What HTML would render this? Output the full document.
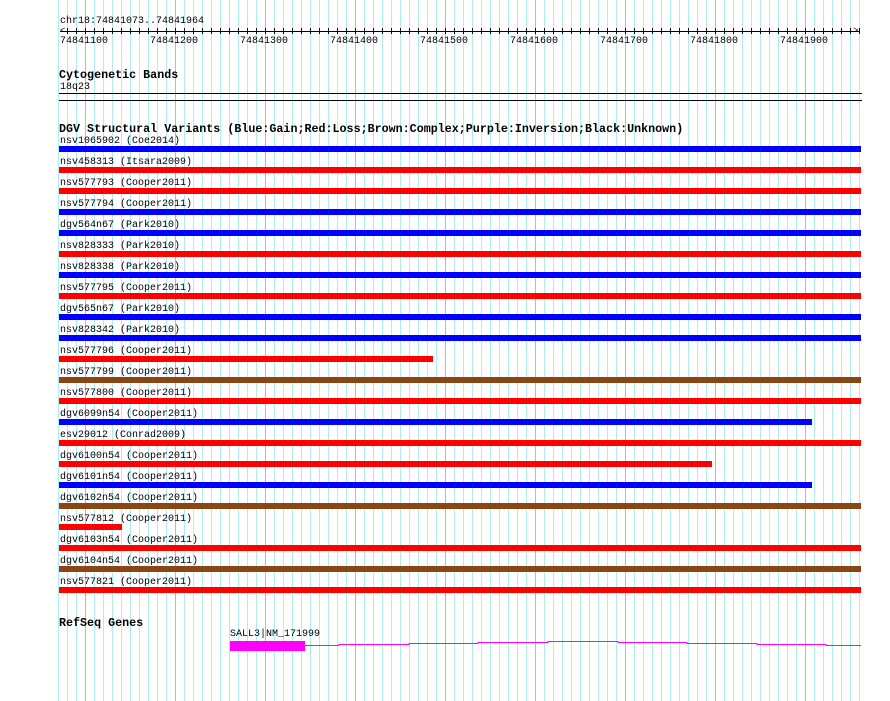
<!DOCTYPE html>
<html><head><style>
body{margin:0;width:890px;height:701px;background:#fff;position:relative;overflow:hidden;font-family:"Liberation Mono",monospace;}
.g{position:absolute;top:0;height:701px;width:1px;background:#aeeef0}
.M{background:#8cc8ee}
.t{position:absolute;font-size:10px;line-height:10px;color:#000;white-space:nowrap}
.b{position:absolute;font-size:11.7px;font-weight:bold;line-height:12px;white-space:nowrap}
.bar{position:absolute;left:59px;height:6px}
.tk{position:absolute;top:27px;width:1px;height:8px;background:#000}
</style></head><body>
<div id="grid"></div>
<div class="t" style="left:60px;top:17px">chr18:74841073..74841964</div>
<div style="position:absolute;left:60px;top:31px;width:800px;height:1px;background:#000"></div>
<div class="t" style="left:60px;top:26px;font-size:9px">&lt;</div>
<div class="t" style="left:853px;top:26px;font-size:9px">&gt;</div>
<div id="ticks"></div>
<div class="t" style="left:60px;top:37px">74841100</div>
<div class="t" style="left:150px;top:37px">74841200</div>
<div class="t" style="left:240px;top:37px">74841300</div>
<div class="t" style="left:330px;top:37px">74841400</div>
<div class="t" style="left:420px;top:37px">74841500</div>
<div class="t" style="left:510px;top:37px">74841600</div>
<div class="t" style="left:600px;top:37px">74841700</div>
<div class="t" style="left:690px;top:37px">74841800</div>
<div class="t" style="left:780px;top:37px">74841900</div>
<div class="b" style="left:59px;top:69px">Cytogenetic Bands</div>
<div class="t" style="left:60px;top:83px">18q23</div>
<div style="position:absolute;left:59px;top:93px;width:803px;height:1px;background:#000"></div>
<div style="position:absolute;left:59px;top:100px;width:803px;height:1px;background:#000"></div>
<div class="b" style="left:59px;top:123px">DGV Structural Variants (Blue:Gain;Red:Loss;Brown:Complex;Purple:Inversion;Black:Unknown)</div>
<div id="tracks"></div>
<div class="b" style="left:59px;top:617px">RefSeq Genes</div>
<div class="t" style="left:230px;top:630px">SALL3|NM_171999</div>
<div style="position:absolute;left:230px;top:641px;width:75px;height:10px;background:#f0f"></div>
<svg style="position:absolute;left:0;top:0" width="890" height="701"><polyline fill="none" stroke="#f0f" stroke-width="1" points="305,645.5 339,645.5 339,644.5 409,644.5 409,643.5 478,643.5 478,642.5 548,642.5 548,641.5 618,641.5 618,642.5 687,642.5 687,643.5 757,643.5 757,644.5 826,644.5 826,645.5 861,645.5"/></svg>
<script>
var g='';for(var x=58;x<=860;x+=9){g+='<div class="g'+((x-85)%90==0?' M':'')+'" style="left:'+x+'px"></div>';}
document.getElementById('grid').innerHTML=g;
var t='';for(var x=67;x<=859;x+=9){t+='<div class="tk" style="left:'+x+'px;top:28px;height:6px"></div>';}
document.getElementById('ticks').innerHTML=t;
var B='#0000ff',R='#ff0000',N='#8b4513';
var d=[['nsv1065902 (Coe2014)',B,861],['nsv458313 (Itsara2009)',R,861],['nsv577793 (Cooper2011)',R,861],['nsv577794 (Cooper2011)',B,861],['dgv564n67 (Park2010)',B,861],['nsv828333 (Park2010)',R,861],['nsv828338 (Park2010)',B,861],['nsv577795 (Cooper2011)',R,861],['dgv565n67 (Park2010)',B,861],['nsv828342 (Park2010)',B,861],['nsv577796 (Cooper2011)',R,433],['nsv577799 (Cooper2011)',N,861],['nsv577800 (Cooper2011)',R,861],['dgv6099n54 (Cooper2011)',B,812],['esv29012 (Conrad2009)',R,861],['dgv6100n54 (Cooper2011)',R,712],['dgv6101n54 (Cooper2011)',B,812],['dgv6102n54 (Cooper2011)',N,861],['nsv577812 (Cooper2011)',R,122],['dgv6103n54 (Cooper2011)',R,861],['dgv6104n54 (Cooper2011)',N,861],['nsv577821 (Cooper2011)',R,861]];
var h='';d.forEach(function(r,i){var y=146+21*i;h+='<div class="t" style="left:60px;top:'+(y-9)+'px">'+r[0]+'</div><div class="bar" style="top:'+y+'px;width:'+(r[2]-59)+'px;background:'+r[1]+'"></div>';});
document.getElementById('tracks').innerHTML=h;
</script>
</body></html>
